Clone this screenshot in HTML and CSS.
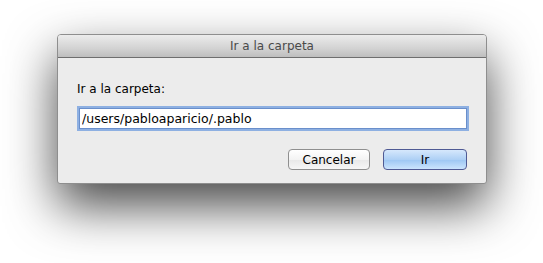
FILE: index.html
```html
<!DOCTYPE html>
<html lang="es">
<head>
    <meta charset="UTF-8">
    <title>Ir a la carpeta</title>
    <link rel="stylesheet" href="styles.css">
</head>
<body>
    <div class="sheet">
        <div class="titlebar">Ir a la carpeta</div>
        <div class="content">
            <label for="pathInput">Ir a la carpeta:</label>
            <input type="text" id="pathInput" class="path" value="/users/pabloaparicio/.pablo" spellcheck="false">
            <div class="actions">
                <button class="btn">Cancelar</button>
                <button class="btn default">Ir</button>
            </div>
        </div>
    </div>
</body>
</html>
```

FILE: styles.css
```css
* { margin: 0; padding: 0; box-sizing: border-box; }
html, body { min-height: 263px; }
body {
    font-family: "DejaVu Sans", sans-serif;
    font-size: 12px;
    color: #000;
    background: #fff;
    padding: 34px 0 0 57px;
}
.sheet {
    width: 430px;
    height: 150px;
    background: #ececec;
    border: 1px solid #8e8e8e;
    border-radius: 4px 4px 3px 3px;
    box-shadow: 0 22px 50px rgba(0, 0, 0, 0.72);
    display: flex;
    flex-direction: column;
}
.titlebar {
    height: 23px;
    line-height: 22px;
    text-align: center;
    color: #4a4a4a;
    background: linear-gradient(#ececec, #d3d3d3 60%, #bebebe);
    border-bottom: 1px solid #6e6e6e;
    border-radius: 3px 3px 0 0;
}
.content {
    padding: 23px 18px 0 19px;
    display: flex;
    flex-direction: column;
}
.content label {
    display: block;
    height: 16px;
    line-height: 16px;
    margin-bottom: 11px;
}
.path {
    width: 388px;
    height: 21px;
    margin-left: 2px;
    padding: 0 2px;
    border: 1px solid #6a8fcb;
    box-shadow: 0 0 0 2px rgba(126, 166, 224, 0.85);
    background: #fff;
    font-family: inherit;
    font-size: 12.5px;
    color: #000;
    outline: none;
}
.actions {
    display: flex;
    justify-content: flex-end;
    gap: 13px;
    margin-top: 20px;
    margin-right: 1px;
}
.btn {
    height: 21px;
    font-family: inherit;
    font-size: 12px;
    color: #000;
    border-radius: 4px;
    border: 1px solid #8f8f8f;
    background: linear-gradient(#ffffff, #f3f3f3 50%, #e8e8e8 51%, #f6f6f6);
    width: 82px;
}
.btn.default {
    width: 84px;
    border-color: #4f5a94;
    background: linear-gradient(#d6e8fc, #aed0f5 50%, #9cc6f3 51%, #cbe4fd);
}
```
